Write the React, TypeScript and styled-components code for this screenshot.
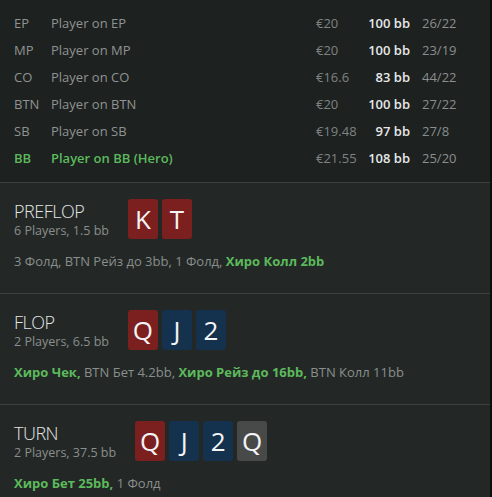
import React from 'react'
import styled, { createGlobalStyle } from 'styled-components'

type Player = {
  pos: string
  name: string
  money: string
  stack: string
  stats: string
  hero?: boolean
}

type CardColor = 'red' | 'blue' | 'gray'

type Card = {
  rank: string
  color: CardColor
}

type Action = {
  text: string
  hero?: boolean
}

type Street = {
  title: string
  info: string
  cards: Card[]
  actions: Action[]
}

const players: Player[] = [
  { pos: 'EP', name: 'Player on EP', money: '€20', stack: '100 bb', stats: '26/22' },
  { pos: 'MP', name: 'Player on MP', money: '€20', stack: '100 bb', stats: '23/19' },
  { pos: 'CO', name: 'Player on CO', money: '€16.6', stack: '83 bb', stats: '44/22' },
  { pos: 'BTN', name: 'Player on BTN', money: '€20', stack: '100 bb', stats: '27/22' },
  { pos: 'SB', name: 'Player on SB', money: '€19.48', stack: '97 bb', stats: '27/8' },
  { pos: 'BB', name: 'Player on BB (Hero)', money: '€21.55', stack: '108 bb', stats: '25/20', hero: true },
]

const streets: Street[] = [
  {
    title: 'PREFLOP',
    info: '6 Players, 1.5 bb',
    cards: [
      { rank: 'K', color: 'red' },
      { rank: 'T', color: 'red' },
    ],
    actions: [
      { text: '3 Фолд, BTN Рейз до 3bb, 1 Фолд, ' },
      { text: 'Хиро Колл 2bb', hero: true },
    ],
  },
  {
    title: 'FLOP',
    info: '2 Players, 6.5 bb',
    cards: [
      { rank: 'Q', color: 'red' },
      { rank: 'J', color: 'blue' },
      { rank: '2', color: 'blue' },
    ],
    actions: [
      { text: 'Хиро Чек, ', hero: true },
      { text: 'BTN Бет 4.2bb, ' },
      { text: 'Хиро Рейз до 16bb, ', hero: true },
      { text: 'BTN Колл 11bb' },
    ],
  },
  {
    title: 'TURN',
    info: '2 Players, 37.5 bb',
    cards: [
      { rank: 'Q', color: 'red' },
      { rank: 'J', color: 'blue' },
      { rank: '2', color: 'blue' },
      { rank: 'Q', color: 'gray' },
    ],
    actions: [
      { text: 'Хиро Бет 25bb, ', hero: true },
      { text: '1 Фолд' },
    ],
  },
]

const cardColors: Record<CardColor, string> = {
  red: '#7b1f1f',
  blue: '#14324e',
  gray: '#484a4a',
}

const GlobalStyle = createGlobalStyle`
  html, body {
    margin: 0;
    padding: 0;
    background: #0d0f0f;
  }
  body {
    font-family: 'Open Sans', 'Noto Sans', sans-serif;
    -webkit-font-smoothing: antialiased;
  }
`

const App: React.FC = () => {
  return (
    <Page>
      <GlobalStyle />
      <Panel>
        <PlayerTable>
          {players.map((p) => (
            <PlayerRow key={p.pos} $hero={!!p.hero}>
              <span className="pos">{p.pos}</span>
              <span className="name">{p.name}</span>
              <span className="money">{p.money}</span>
              <span className="stack">{p.stack}</span>
              <span className="stats">{p.stats}</span>
            </PlayerRow>
          ))}
        </PlayerTable>

        {streets.map((s) => (
          <StreetBlock key={s.title}>
            <StreetHeader>
              <StreetTitle>
                <div className="title">{s.title}</div>
                <div className="info">{s.info}</div>
              </StreetTitle>
              <Cards>
                {s.cards.map((c, i) => (
                  <CardBox key={i} $color={c.color}>
                    {c.rank}
                  </CardBox>
                ))}
              </Cards>
            </StreetHeader>
            <Actions>
              {s.actions.map((a, i) => (
                <ActionText key={i} $hero={!!a.hero}>
                  {a.text}
                </ActionText>
              ))}
            </Actions>
          </StreetBlock>
        ))}
      </Panel>
    </Page>
  )
}

const Page = styled.div`
  width: 492px;
  height: 497px;
  overflow: hidden;
  display: flex;
`

const Panel = styled.div`
  width: 490px;
  background-color: #232826;
  display: flex;
  flex-direction: column;
`

const PlayerTable = styled.div`
  background-color: #1d2120;
  padding: 9px 0 11px;
  border-bottom: 1px solid #3c413f;
`

const PlayerRow = styled.div<{ $hero: boolean }>`
  display: grid;
  grid-template-columns: 37px 265px 50px 44px 60px;
  align-items: center;
  height: 27px;
  padding-left: 14px;
  font-size: 13px;
  white-space: nowrap;
  color: #8f9392;

  .pos,
  .name {
    color: ${(props) => (props.$hero ? '#5cba5c' : '#8f9392')};
    font-weight: ${(props) => (props.$hero ? 600 : 400)};
  }

  .money {
    color: #7f8382;
  }

  .stack {
    text-align: right;
    font-weight: 600;
    color: #e6e8e7;
  }

  .stats {
    padding-left: 12px;
    color: #8a8e8d;
  }
`

const StreetBlock = styled.div`
  padding: 16px 14px 23px;
  border-bottom: 1px solid #3c413f;
`

const StreetHeader = styled.div`
  display: flex;
  align-items: center;
  gap: 19px;
`

const StreetTitle = styled.div`
  display: flex;
  flex-direction: column;

  .title {
    font-size: 18px;
    font-weight: 300;
    letter-spacing: -0.5px;
    line-height: 22px;
    color: #e4e6e5;
  }

  .info {
    font-size: 12.5px;
    line-height: 17px;
    color: #8a8e8d;
  }
`

const Cards = styled.div`
  display: flex;
  gap: 4px;
`

const CardBox = styled.div<{ $color: CardColor }>`
  width: 30px;
  height: 40px;
  border-radius: 3px;
  background-color: ${(props) => cardColors[props.$color]};
  color: #f4f4f4;
  font-size: 26px;
  display: flex;
  align-items: center;
  justify-content: center;
`

const Actions = styled.div`
  margin-top: 13px;
  font-size: 13px;
  line-height: 18px;
  white-space: nowrap;
`

const ActionText = styled.span<{ $hero: boolean }>`
  color: ${(props) => (props.$hero ? '#5cba5c' : '#8a8e8d')};
  font-weight: ${(props) => (props.$hero ? 700 : 400)};
  white-space: pre;
`

export default App
